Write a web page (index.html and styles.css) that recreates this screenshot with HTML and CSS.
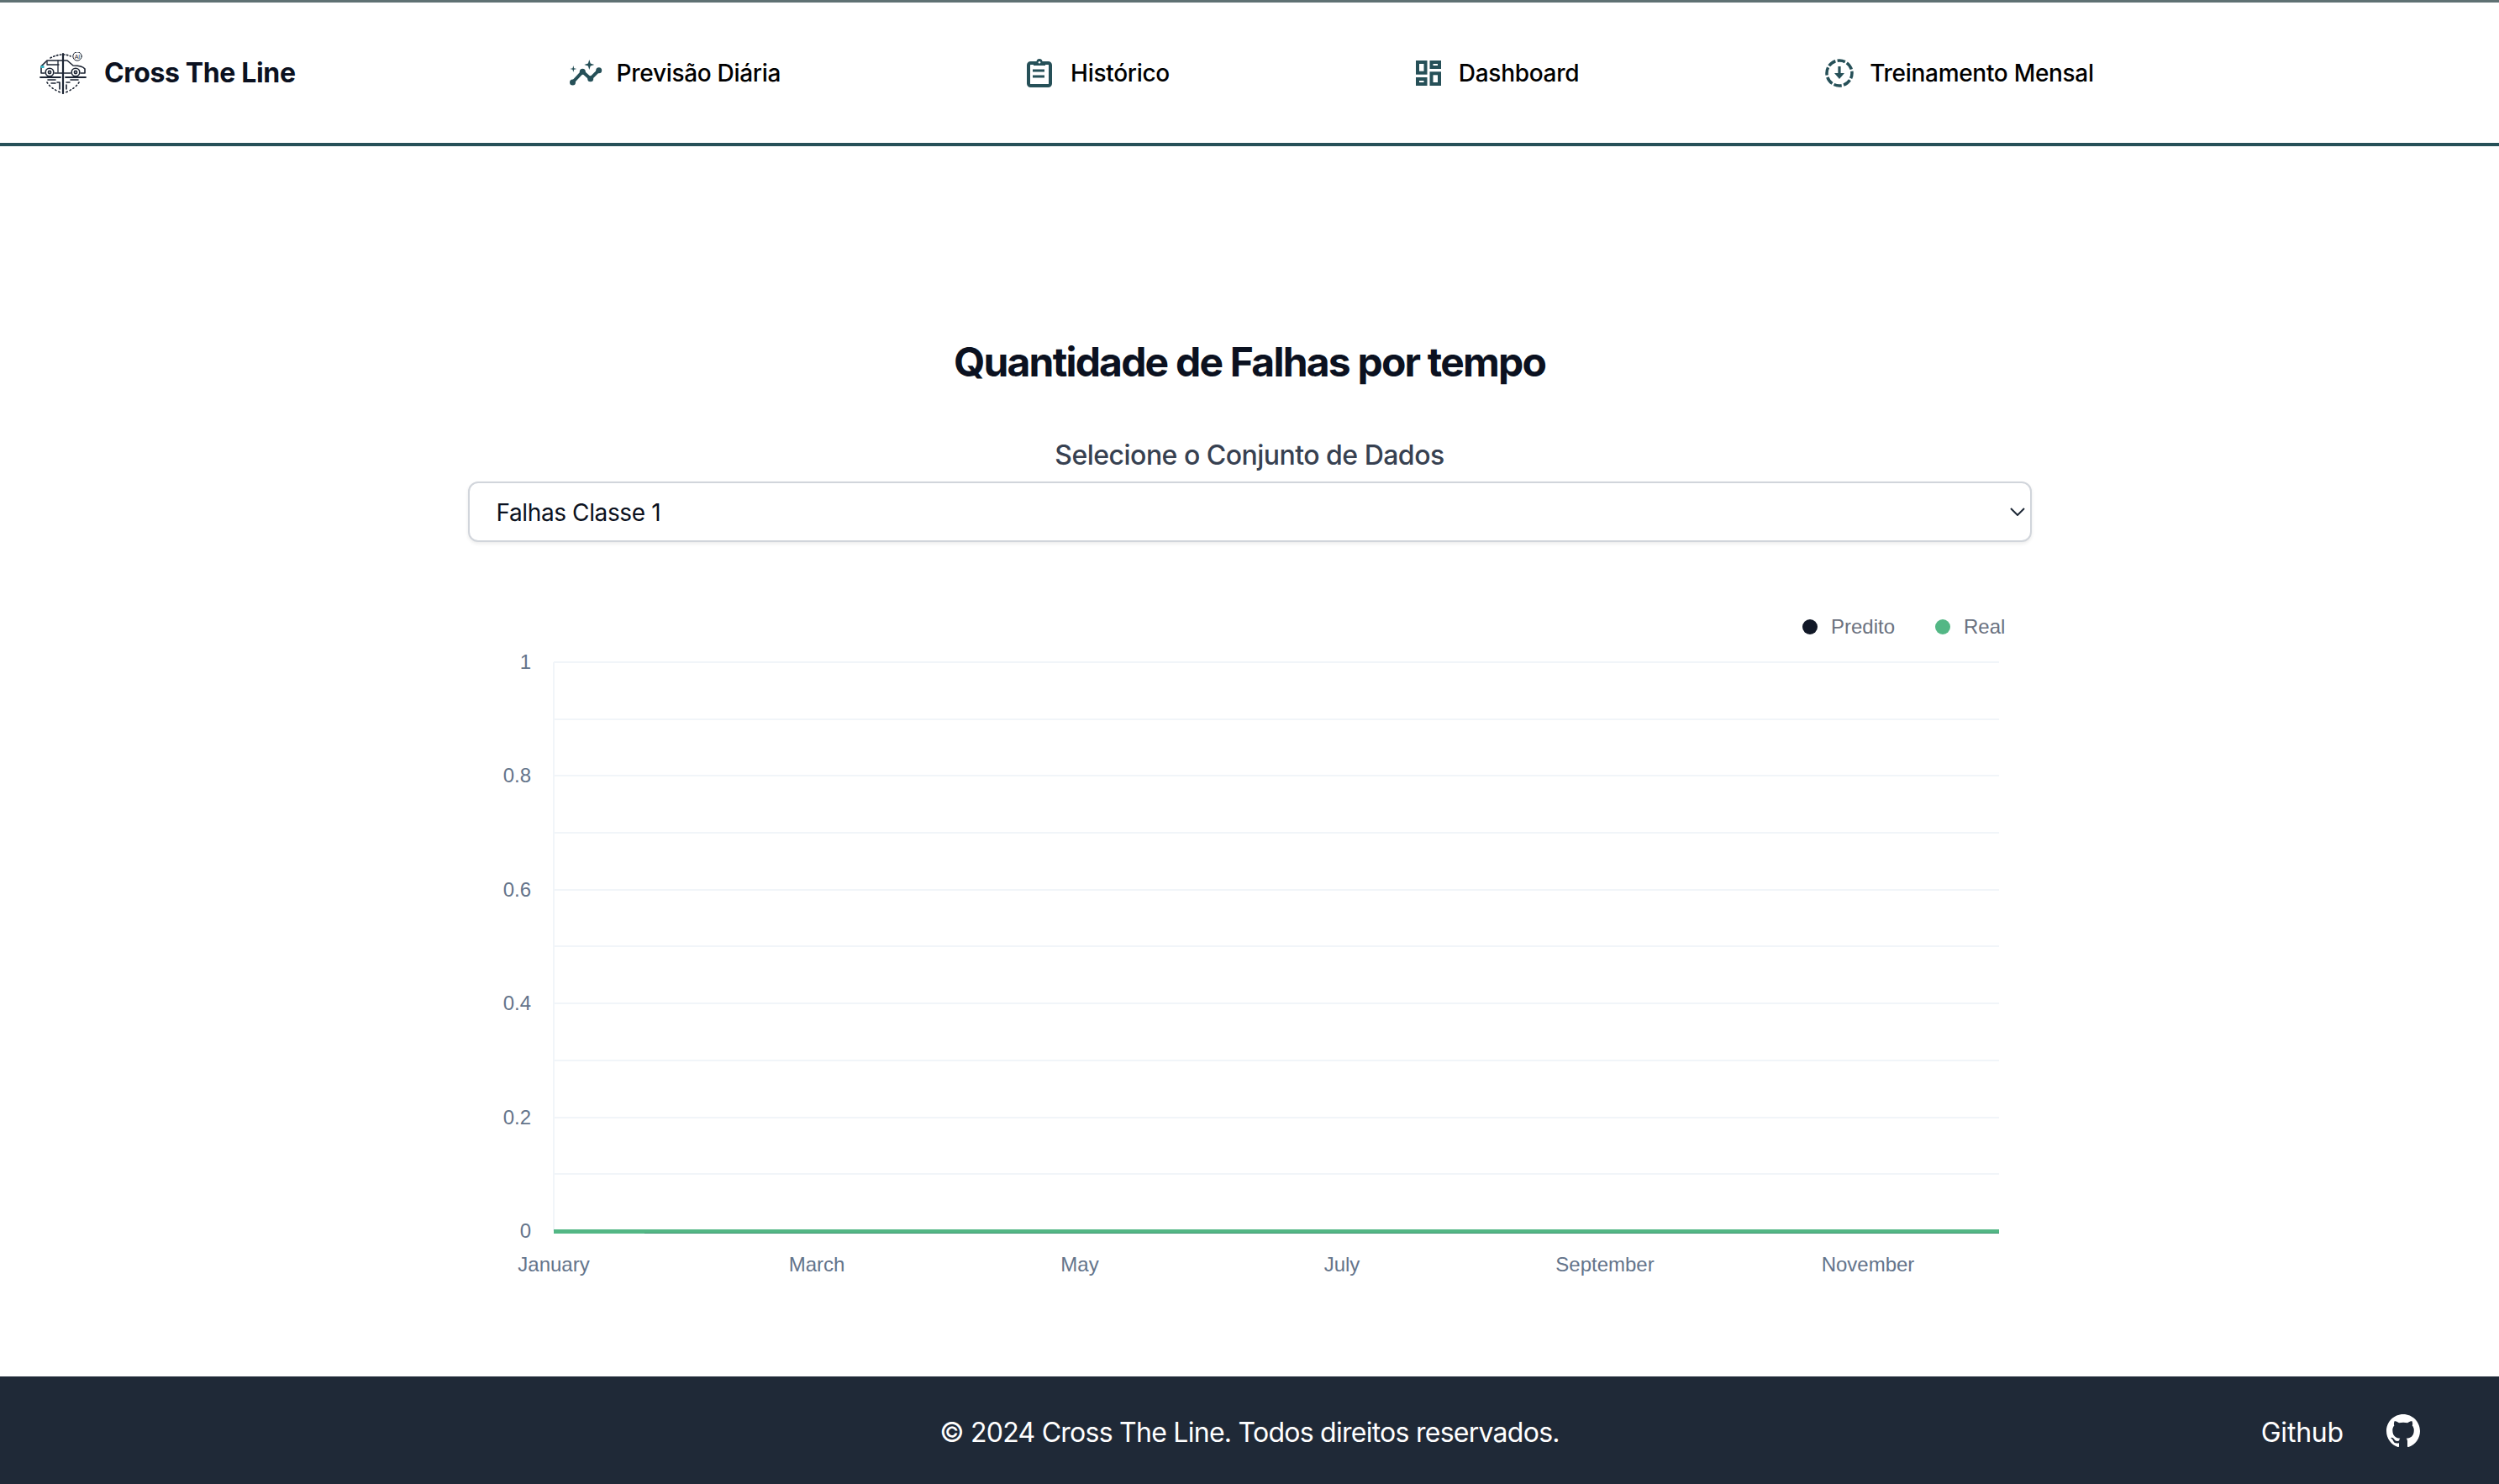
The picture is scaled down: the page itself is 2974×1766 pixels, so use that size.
FILE: index.html
```html
<!DOCTYPE html>
<html lang="pt-BR">
<head>
<meta charset="utf-8">
<title>Cross The Line</title>
<link rel="stylesheet" href="styles.css">
</head>
<body>
<header class="topbar">
  <a class="brand">
    <svg class="brand-logo" viewBox="47 62 58 50" width="58" height="50">
      <g fill="none" stroke="#1c2433" stroke-width="1.600" stroke-linecap="round" stroke-linejoin="round">
        <path d="M60 69Q67 65 75 65Q81 65 84 67" stroke-dasharray="1.500 2.500"/>
        <path d="M56 98Q60 105 72 110M94 98Q90 105 78 110" stroke-dasharray="1.500 3"/>
        <path d="M53 87H49V80Q49 78 51 77L56 72H70Q76 72 80 72L87 78Q98 78 101 82V87H96M84 87H65"/>
        <path d="M56 73V77H70M69 72V86" stroke-width="1.300"/>
        <circle cx="59" cy="86" r="4.800" fill="#fff"/><circle cx="59" cy="86" r="1.600"/>
        <circle cx="90" cy="86" r="4.800" fill="#fff"/><circle cx="90" cy="86" r="1.600"/>
        <path d="M48 92H72M78 92H102" stroke-width="1.800"/>
        <path d="M57 95H66M84 95H93M68 98H71V106M79 98H83M79 101V106M61 99H66"/>
        <circle cx="92" cy="67" r="5.200" stroke-width="1"/>
      </g>
      <path d="M75 64V111" stroke="#1c2433" stroke-width="2.200" stroke-linecap="round"/>
      <path d="M48.500 78H52.500V81H48.500Z" fill="#35b3c4"/>
      <text class="logo-ai" x="92" y="69.500" text-anchor="middle">AI</text>
    </svg>
    <span class="brand-name">Cross The Line</span>
  </a>
  <nav class="nav">
    <a class="nav-item nav-item-forecast">
      <svg class="icon icon-forecast" viewBox="0 0 40 34" width="40" height="34">
        <path d="M3 28.500L15.300 15.300L24.700 23.700L34.700 13.700" fill="none" stroke="#265058" stroke-width="4" stroke-linecap="round" stroke-linejoin="round"/>
        <circle cx="3.500" cy="28" r="3.500" fill="#265058"/><circle cx="15.300" cy="15.300" r="3.500" fill="#265058"/><circle cx="24.700" cy="23.700" r="3.500" fill="#265058"/><circle cx="34.700" cy="13.700" r="3.500" fill="#265058"/>
        <path d="M23.300 1L24.700 5.600L29.300 7L24.700 8.400L23.300 13L21.900 8.400L17.300 7L21.900 5.600Z" fill="#265058"/>
        <path d="M4.300 8L5.100 11.200L8.300 12L5.100 12.800L4.300 16L3.500 12.800L.3 12L3.500 11.200Z" fill="#265058"/>
      </svg>
      <span>Previsão Diária</span>
    </a>
    <a class="nav-item nav-item-history">
      <svg class="icon icon-history" viewBox="0 0 30 34" width="30" height="34">
        <rect x="2" y="5" width="26" height="27" rx="2.500" fill="none" stroke="#265058" stroke-width="4"/>
        <path d="M8 3.500H11.500A3.500 3.500 0 0 1 18.500 3.500H22V8H8Z" fill="#265058"/>
        <circle cx="15" cy="4.300" r="1.300" fill="#fff"/>
        <path d="M7 14H21M7 21H21" stroke="#265058" stroke-width="3"/>
      </svg>
      <span>Histórico</span>
    </a>
    <a class="nav-item nav-item-dashboard">
      <svg class="icon icon-dashboard" viewBox="0 0 30 30" width="30" height="30">
        <g fill="none" stroke="#265058" stroke-width="4">
          <rect x="2" y="2" width="9.500" height="12.700"/>
          <rect x="18.500" y="2" width="9.500" height="6"/>
          <rect x="2" y="22" width="9.500" height="6"/>
          <rect x="18.500" y="15.300" width="9.500" height="12.700"/>
        </g>
      </svg>
      <span>Dashboard</span>
    </a>
    <a class="nav-item nav-item-training">
      <svg class="icon icon-training" viewBox="0 0 34 34" width="34" height="34">
        <circle cx="17" cy="17" r="15" fill="none" stroke="#265058" stroke-width="3.500" stroke-dasharray="9.500 2.300" stroke-dashoffset="3"/>
        <path d="M15.400 9H18.600V17H23L17 24L11 17H15.400Z" fill="#265058"/>
      </svg>
      <span>Treinamento Mensal</span>
    </a>
  </nav>
</header>

<main class="content">
  <h1 class="title">Quantidade de Falhas por tempo</h1>
  <section class="panel">
    <label class="field-label" for="dataset">Selecione o Conjunto de Dados</label>
    <div class="select-wrap">
      <select class="select" id="dataset">
        <option>Falhas Classe 1</option>
        <option>Falhas Classe 2</option>
      </select>
      <svg class="select-chevron" viewBox="0 0 18 10" width="18" height="10"><path d="M1 1L9 9L17 1" fill="none" stroke="#1f2937" stroke-width="2"/></svg>
    </div>
    <svg class="chart" viewBox="557 720 1861 820" width="1861" height="820">
      <g class="grid">
        <path d="M659 788V1465"/>
        <path d="M659 788H2379M659 856H2379M659 923H2379M659 991H2379M659 1059H2379M659 1126H2379M659 1194H2379M659 1262H2379M659 1330H2379M659 1397H2379"/>
      </g>
      <path class="line-real" d="M659 1465.500H2379"/>
      <path class="line-pred" d="M767 1467.500H2379"/>
      <g class="ticks ticks-y">
        <text x="632" y="796">1</text>
        <text x="632" y="931">0.8</text>
        <text x="632" y="1067">0.6</text>
        <text x="632" y="1202">0.4</text>
        <text x="632" y="1338">0.2</text>
        <text x="632" y="1473">0</text>
      </g>
      <g class="ticks ticks-x">
        <text x="659" y="1513">January</text>
        <text x="972" y="1513">March</text>
        <text x="1285" y="1513">May</text>
        <text x="1597" y="1513">July</text>
        <text x="1910" y="1513">September</text>
        <text x="2223" y="1513">November</text>
      </g>
      <circle class="dot-pred" cx="2154" cy="746" r="9"/>
      <text class="legend" x="2179" y="754">Predito</text>
      <circle class="dot-real" cx="2312" cy="746" r="9"/>
      <text class="legend" x="2337" y="754">Real</text>
    </svg>
  </section>
</main>

<footer class="footer">
  <p class="copyright">© 2024 Cross The Line. Todos direitos reservados.</p>
  <a class="github">
    <span>Github</span>
    <svg class="github-icon" viewBox="0 0 16 16" width="40" height="40"><path fill="#fff" d="M8 0C3.58 0 0 3.58 0 8c0 3.54 2.29 6.53 5.47 7.59.4.07.55-.17.55-.38 0-.19-.01-.82-.01-1.49-2.01.37-2.53-.49-2.69-.94-.09-.23-.48-.94-.82-1.13-.28-.15-.68-.52-.01-.53.63-.01 1.08.58 1.23.82.72 1.21 1.87.87 2.33.66.07-.52.28-.87.51-1.07-1.78-.2-3.64-.89-3.64-3.95 0-.87.31-1.59.82-2.15-.08-.2-.36-1.02.08-2.12 0 0 .67-.21 2.2.82.64-.18 1.32-.27 2-.27.68 0 1.36.09 2 .27 1.53-1.04 2.2-.82 2.2-.82.44 1.1.16 1.92.08 2.12.51.56.82 1.27.82 2.15 0 3.07-1.87 3.75-3.65 3.95.29.25.54.73.54 1.48 0 1.07-.01 1.93-.01 2.2 0 .21.15.46.55.38A8.013 8.013 0 0016 8c0-4.42-3.58-8-8-8z"/></svg>
  </a>
</footer>
</body>
</html>
```

FILE: styles.css
```css
* { box-sizing: border-box; }
html, body { margin: 0; padding: 0; height: 100%; }
body {
  display: flex;
  flex-direction: column;
  min-height: 1766px;
  background: #fff;
  color: #000;
  font-family: Inter, "Liberation Sans", sans-serif;
}
.topbar {
  display: flex;
  align-items: center;
  height: 174px;
  padding-left: 47px;
  border-top: 3px solid #5f7173;
  border-bottom: 4px solid #265058;
}
.brand { display: flex; align-items: center; gap: 19px; margin-right: 326px; }
.brand-logo { display: block; }
.brand-name { font-size: 32px; font-weight: 700; letter-spacing: -.36px; color: #0b1120; line-height: 40px; }
.logo-ai { font-family: "Liberation Sans", sans-serif; font-size: 7px; fill: #1c2433; }
.nav { display: flex; align-items: center; gap: 293px; }
.nav-item { display: flex; align-items: center; font-size: 28px; font-weight: 500; letter-spacing: -.3px; line-height: 40px; color: #000; }
.icon { display: block; flex: none; }
.nav-item-forecast { gap: 16px; }
.nav-item-history { gap: 22px; }
.nav-item-dashboard { gap: 21px; }
.nav-item-training { gap: 19px; }

.content {
  flex: 1;
  display: flex;
  flex-direction: column;
  align-items: center;
  padding-top: 232px;
}
.title { margin: 0; font-size: 48px; line-height: 50px; font-weight: 700; letter-spacing: -1.8px; color: #0b1120; text-align: center; }
.panel { width: 1861px; margin-top: 64px; display: flex; flex-direction: column; }
.field-label { display: block; text-align: center; font-size: 32px; line-height: 44px; font-weight: 500; letter-spacing: -.52px; color: #374151; }
.select-wrap { position: relative; margin-top: 9px; }
.select {
  display: block;
  width: 100%;
  height: 72px;
  padding: 2px 32px 0;
  appearance: none;
  -webkit-appearance: none;
  background: #fff;
  border: 2px solid #d1d5db;
  border-radius: 12px;
  box-shadow: 0 2px 4px rgba(0, 0, 0, .08);
  font-family: inherit;
  font-size: 28px;
  letter-spacing: -.38px;
  color: #0b1120;
}
.select-chevron { position: absolute; right: 8px; top: 31px; }
.chart { display: block; margin-top: 75px; }
.grid path { fill: none; stroke: #f1f5f9; stroke-width: 2; }
.line-pred { stroke: #3f9672; stroke-width: 1; fill: none; }
.line-real { stroke: #53b785; stroke-width: 5; fill: none; }
.ticks text, .legend { font-family: "Liberation Sans", sans-serif; font-size: 24px; }
.ticks text { fill: #64748b; }
.ticks-y text { text-anchor: end; }
.ticks-x text { text-anchor: middle; }
.legend { fill: #6b7280; }
.dot-pred { fill: #111827; }
.dot-real { fill: #53b785; }

.footer {
  position: relative;
  display: flex;
  align-items: center;
  justify-content: center;
  height: 128px;
  padding-top: 6px;
  background: #1f2937;
  color: #fff;
}
.copyright { margin: 0; font-size: 32px; line-height: 44px; letter-spacing: -.74px; }
.github {
  position: absolute;
  right: 94px;
  top: 45px;
  display: flex;
  align-items: center;
  gap: 51px;
  font-size: 32px;
  line-height: 40px;
  letter-spacing: -.2px;
}
.github span { position: relative; top: 2px; }
.github-icon { display: block; }
```
